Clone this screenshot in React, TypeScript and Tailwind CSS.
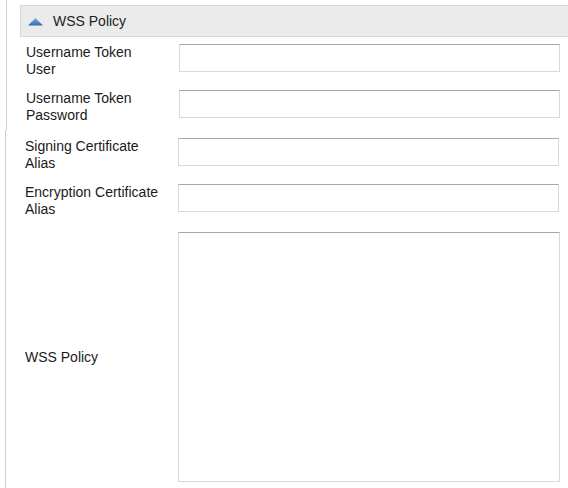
import React from 'react';

const labelFont = { fontFamily: '"Liberation Sans", Arial, sans-serif' };

interface FieldRowProps {
  label: string;
  className?: string;
}

const FieldRow: React.FC<FieldRowProps> = ({ label, className = '' }) => (
  <div className={`flex items-start ${className}`}>
    <div className="w-[172px] shrink-0 pl-[19px] pr-1 text-[14px] leading-[17px] text-[#1a1a1a]">
      {label.split('\n').map((line, i) => (
        <div key={i}>{line}</div>
      ))}
    </div>
    <input
      type="text"
      className="h-[28px] w-[381px] border border-[#d9d9dc] border-t-[#a8a8a8] bg-white outline-none"
    />
  </div>
);

const App: React.FC = () => {
  return (
    <div className="h-[488px] w-[568px] overflow-hidden bg-white" style={labelFont}>
      {/* Header and first two rows */}
      <div className="ml-[6px] h-[130px] border-l border-[#cfcfcf] pt-[5px]">
        <div className="ml-[13px] flex h-[32px] items-center border border-r-0 border-[#d6d6d6] bg-[#ebebeb]">
          <svg width="15" height="8" viewBox="0 0 15 8" className="ml-[7px] mt-[1px]">
            <defs>
              <linearGradient id="tri" x1="0" y1="0" x2="0" y2="1">
                <stop offset="0%" stopColor="#7ab3e0" />
                <stop offset="100%" stopColor="#2e6aa8" />
              </linearGradient>
            </defs>
            <polygon points="7.5,0 15,7.5 0,7.5" fill="url(#tri)" />
          </svg>
          <span className="ml-[10px] text-[14px] text-[#222]">WSS Policy</span>
        </div>
        <div className="mt-[7px] flex flex-col gap-[12px]">
          <FieldRow label={'Username Token\nUser'} />
          <FieldRow label={'Username Token\nPassword'} />
        </div>
      </div>

      {/* Remaining rows */}
      <div className="ml-[5px] h-[358px] border-l border-[#cfcfcf] pt-[8px]">
        <div className="flex flex-col gap-[12px]">
          <FieldRow label={'Signing Certificate\nAlias'} />
          <FieldRow label={'Encryption Certificate\nAlias'} />
        </div>
        <div className="mt-[14px] flex items-center">
          <div className="w-[172px] shrink-0 pl-[19px] text-[14px] leading-[17px] text-[#1a1a1a]">
            WSS Policy
          </div>
          <textarea className="h-[250px] w-[382px] resize-none border border-[#d9d9dc] border-t-[#a8a8a8] bg-white outline-none" />
        </div>
      </div>
    </div>
  );
};

export default App;
